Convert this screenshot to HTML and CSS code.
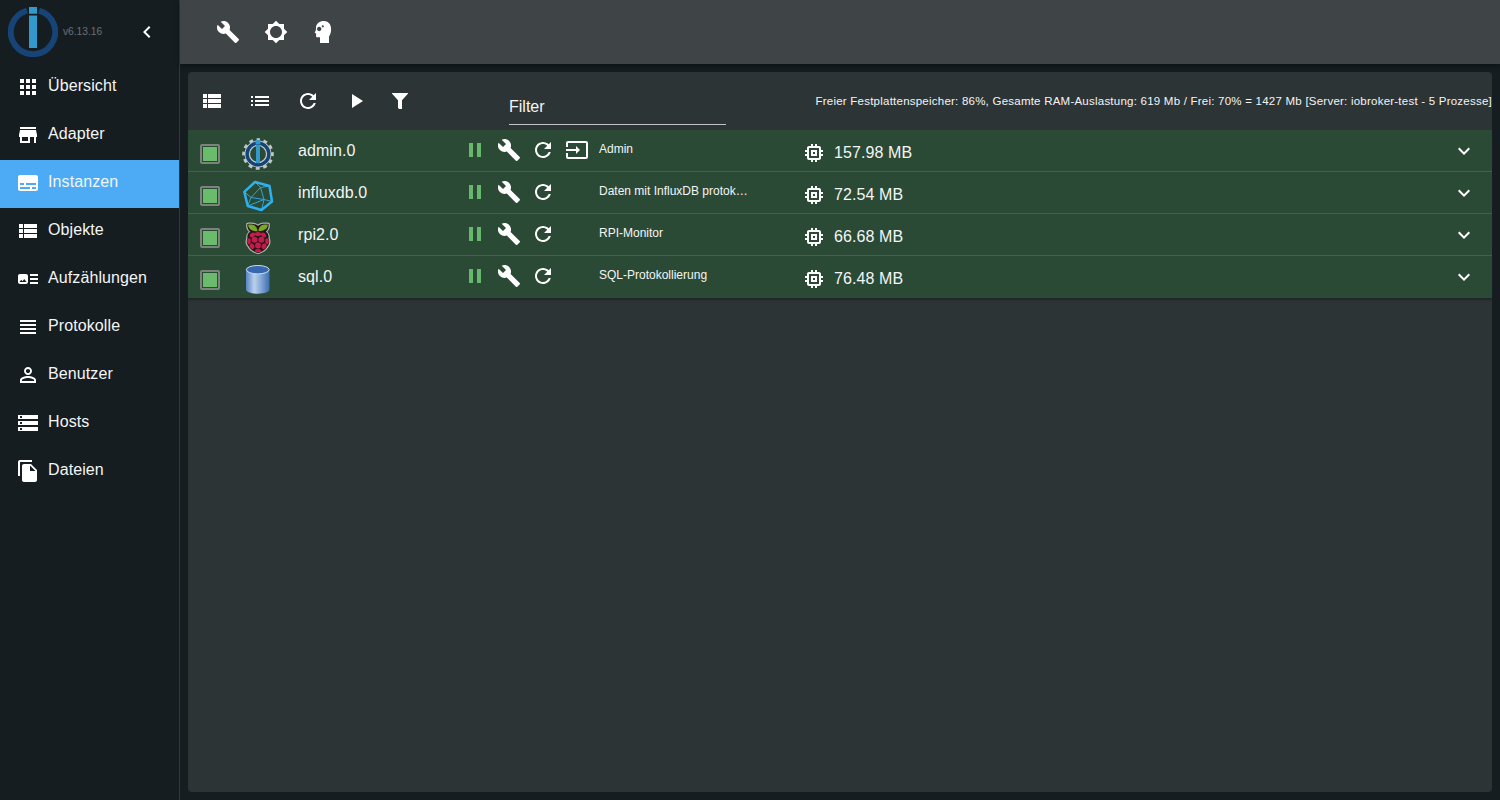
FILE: index.html
```html
<!DOCTYPE html>
<html lang="de">
<head>
<meta charset="utf-8">
<title>Instanzen</title>
<link rel="stylesheet" href="styles.css">
</head>
<body>
<svg class="defs" width="0" height="0">
  <symbol id="build" viewBox="0 0 24 24"><path d="M22.7 19l-9.1-9.1c.9-2.3.4-5-1.5-6.9-2-2-5-2.4-7.4-1.3L9 6 6 9 1.6 4.7C.4 7.1.9 10.1 2.9 12.1c1.9 1.9 4.6 2.4 6.9 1.5l9.1 9.1c.4.4 1 .4 1.4 0l2.3-2.3c.5-.4.5-1.1.1-1.4z"/></symbol>
  <symbol id="refresh" viewBox="0 0 24 24"><path d="M17.65 6.35C16.2 4.9 14.21 4 12 4c-4.42 0-7.99 3.58-7.99 8s3.57 8 7.99 8c3.73 0 6.84-2.55 7.73-6h-2.08c-.82 2.33-3.04 4-5.65 4-3.31 0-6-2.69-6-6s2.69-6 6-6c1.66 0 3.14.69 4.22 1.78L13 11h7V4l-2.35 2.35z"/></symbol>
  <symbol id="viewlist" viewBox="0 0 24 24"><path d="M3 14h4v-4H3v4zm0 5h4v-4H3v4zM3 9h4V5H3v4zm5 5h13v-4H8v4zm0 5h13v-4H8v4zM8 5v4h13V5H8z"/></symbol>
  <symbol id="pause" viewBox="0 0 24 24"><path d="M6 19h4V5H6v14zm8-14v14h4V5h-4z"/></symbol>
  <symbol id="input" viewBox="0 0 24 24"><path d="M21 3.01H3c-1.1 0-2 .9-2 2V9h2V4.99h18v14.03H3V15H1v4.01c0 1.1.9 1.98 2 1.98h18c1.1 0 2-.88 2-1.98v-14c0-1.11-.9-2-2-2zM11 16l4-4-4-4v3H1v2h10v3z"/></symbol>
  <symbol id="memory" viewBox="0 0 24 24"><path d="M15 9H9v6h6V9zm-2 4h-2v-2h2v2zm8-2V9h-2V7c0-1.1-.9-2-2-2h-2V3h-2v2h-2V3H9v2H7c-1.1 0-2 .9-2 2v2H3v2h2v2H3v2h2v2c0 1.1.9 2 2 2h2v2h2v-2h2v2h2v-2h2c1.1 0 2-.9 2-2v-2h2v-2h-2v-2h2zm-4 6H7V7h10v10z"/></symbol>
  <symbol id="more" viewBox="0 0 24 24"><path d="M16.59 8.59L12 13.17 7.41 8.59 6 10l6 6 6-6z"/></symbol>
</svg>
<div class="app">
  <nav class="sidebar">
    <div class="brand">
      <svg class="logo" viewBox="0 0 50 50"><path d="M19 3.6a22.2 22.2 0 1 0 12 0" fill="none" stroke="#164477" stroke-width="6"/><path d="M21 0h8v6.800h-8zM21 8.600h8v32.400h-8z" fill="#3399cc"/></svg>
      <span class="version">v6.13.16</span>
      <svg class="icon" viewBox="0 0 24 24"><path d="M15.41 7.41L14 6l-6 6 6 6 1.41-1.41L10.83 12z"/></svg>
    </div>
    <a class="item"><svg class="icon" viewBox="0 0 24 24"><path d="M4 8h4V4H4v4zm6 12h4v-4h-4v4zm-6 0h4v-4H4v4zm0-6h4v-4H4v4zm6 0h4v-4h-4v4zm6-10v4h4V4h-4zm-6 4h4V4h-4v4zm6 6h4v-4h-4v4zm0 6h4v-4h-4v4z"/></svg><span>Übersicht</span></a>
    <a class="item"><svg class="icon" viewBox="0 0 24 24"><path d="M20 4H4v2h16V4zm1 10v-2l-1-5H4l-1 5v2h1v6h10v-6h4v6h2v-6h1zm-9 4H6v-4h6v4z"/></svg><span>Adapter</span></a>
    <a class="item active"><svg class="icon" viewBox="0 0 24 24"><path d="M20 4H4c-1.1 0-2 .9-2 2v12c0 1.1.9 2 2 2h16c1.1 0 2-.9 2-2V6c0-1.1-.9-2-2-2zM4 12h4v2H4v-2zm10 6H4v-2h10v2zm6 0h-4v-2h4v2zm0-4H10v-2h10v2z"/></svg><span>Instanzen</span></a>
    <a class="item"><svg class="icon"><use href="#viewlist"/></svg><span>Objekte</span></a>
    <a class="item"><svg class="icon" viewBox="0 0 24 24"><path d="M22 13h-8v-2h8v2zm0-6h-8v2h8V7zm-8 10h8v-2h-8v2zm-2-8v6c0 1.1-.9 2-2 2H4c-1.1 0-2-.9-2-2V9c0-1.1.9-2 2-2h6c1.1 0 2 .9 2 2zm-1.5 6l-2.25-3-1.75 2.26-1.25-1.51L3.5 15h7z"/></svg><span>Aufzählungen</span></a>
    <a class="item"><svg class="icon" viewBox="0 0 24 24"><path d="M4 15h16v-2H4v2zm0 4h16v-2H4v2zm0-8h16V9H4v2zm0-6v2h16V5H4z"/></svg><span>Protokolle</span></a>
    <a class="item"><svg class="icon" viewBox="0 0 24 24"><path d="M12 5.900c1.160 0 2.100.94 2.100 2.100s-.94 2.100-2.100 2.100S9.900 9.160 9.900 8s.94-2.100 2.100-2.100m0 9c2.970 0 6.100 1.460 6.100 2.100v1.100H5.900V17c0-.64 3.130-2.100 6.100-2.100M12 4C9.790 4 8 5.790 8 8s1.790 4 4 4 4-1.790 4-4-1.790-4-4-4zm0 9c-2.670 0-8 1.340-8 4v3h16v-3c0-2.660-5.330-4-8-4z"/></svg><span>Benutzer</span></a>
    <a class="item"><svg class="icon" viewBox="0 0 24 24"><path d="M2 20h20v-4H2v4zm2-3h2v2H4v-2zM2 4v4h20V4H2zm4 3H4V5h2v2zm-4 7h20v-4H2v4zm2-3h2v2H4v-2z"/></svg><span>Hosts</span></a>
    <a class="item"><svg class="icon" viewBox="0 0 24 24"><path d="M16 1H4c-1.100 0-2 .9-2 2v14h2V3h12V1zm-1 4l6 6v10c0 1.100-.9 2-2 2H7.990C6.890 23 6 22.100 6 21V7c0-1.100.89-2 1.990-2H15zm-1 7h5.500L14 6.500V12z"/></svg><span>Dateien</span></a>
  </nav>
  <div class="content">
    <header class="appbar">
      <svg class="icon"><use href="#build"/></svg>
      <svg class="icon" viewBox="0 0 24 24"><path d="M20 15.310L23.310 12 20 8.690V4h-4.690L12 .69 8.690 4H4v4.690L.69 12 4 15.310V20h4.690L12 23.310 15.310 20H20v-4.690zM12 18c-3.310 0-6-2.690-6-6s2.690-6 6-6 6 2.690 6 6-2.690 6-6 6z"/></svg>
      <svg class="icon" viewBox="0 0 24 24"><path fill-rule="evenodd" d="M11.800 1C7.500 1 4.300 3.600 4 7.500L3.900 10 2.800 12.600c-.1.400.1.700.5.700h.8v3c0 .6.400 1 1 1H8V23h9v-6.600c1.400-1.700 2.100-4 2.100-7.400C19.100 4 16.200 1 11.800 1zM7.200 6.800a2.200 2.200 0 1 0 .01 0zM10.800 5.200a1.100 1.100 0 1 0 .01 0z"/></svg>
    </header>
    <main class="panel">
      <div class="toolbar">
        <svg class="icon"><use href="#viewlist"/></svg>
        <svg class="icon" viewBox="0 0 24 24"><path d="M3 13h2v-2H3v2zm0 4h2v-2H3v2zm0-8h2V7H3v2zm4 4h14v-2H7v2zm0 4h14v-2H7v2zM7 7v2h14V7H7z"/></svg>
        <svg class="icon"><use href="#refresh"/></svg>
        <svg class="icon" viewBox="0 0 24 24"><path d="M8 5v14l11-7z"/></svg>
        <svg class="icon funnel" viewBox="0 0 24 24"><path d="M4.300 4h15.400c.4 0 .5.500.2.800L14 11.200v8.300c0 .4-.3.600-.7.500h-2.100l-1.200-1V11.200L4.100 4.800c-.3-.3-.2-.8.200-.8z"/></svg>
        <div class="filter">Filter</div>
        <div class="stats">Freier Festplattenspeicher: 86%, Gesamte RAM-Auslastung: 619 Mb / Frei: 70% = 1427 Mb [Server: iobroker-test - 5 Prozesse]</div>
      </div>
      <div class="rows">
        <div class="row">
          <span class="state"></span>
          <svg class="adapter" viewBox="0 0 32 32"><g fill="none" stroke="#bfc7c8"><circle cx="16" cy="16" r="14" stroke-width="3.600" stroke-dasharray="3.800 3.530" stroke-dashoffset="1.900" transform="rotate(-90 16 16)"/><circle cx="16" cy="16" r="12.800" stroke-width="1.200"/><circle cx="16" cy="16" r="8.700" stroke-width="1.600"/></g><circle cx="16" cy="16" r="10.900" fill="none" stroke="#144578" stroke-width="3.300"/><path d="M13.600 2h4.800v4.500h-4.800zM14 7h4v18h-4z" fill="#3399cc"/></svg>
          <span class="name">admin.0</span>
          <div class="actions"><svg class="icon green"><use href="#pause"/></svg><svg class="icon"><use href="#build"/></svg><svg class="icon"><use href="#refresh"/></svg><svg class="icon"><use href="#input"/></svg></div>
          <span class="desc">Admin</span>
          <div class="mem"><svg class="icon"><use href="#memory"/></svg><span>157.98 MB</span></div>
          <svg class="icon expand"><use href="#more"/></svg>
        </div>
        <div class="row">
          <span class="state"></span>
          <svg class="adapter" viewBox="0 0 32 32" fill="none" stroke="#2fb0ee" stroke-linejoin="round"><path d="M13 2l14.500 4L30 21.500 19.500 30 5.700 26 2.300 11.800z" stroke-width="2.500"/><path d="M13 2l5.500 5.500 9-1.500M18.500 7.500L9 17.500l13 2zM2.300 11.800L9 17.500 5.700 26 22 19.500l8 2M22 19.500L19.500 30" stroke-width=".9"/></svg>
          <span class="name">influxdb.0</span>
          <div class="actions"><svg class="icon green"><use href="#pause"/></svg><svg class="icon"><use href="#build"/></svg><svg class="icon"><use href="#refresh"/></svg></div>
          <span class="desc">Daten mit InfluxDB protok…</span>
          <div class="mem"><svg class="icon"><use href="#memory"/></svg><span>72.54 MB</span></div>
          <svg class="icon expand"><use href="#more"/></svg>
        </div>
        <div class="row">
          <span class="state"></span>
          <svg class="adapter" viewBox="0 0 32 32"><path d="M16 2.500C18.500.3 23 .2 27.600 1c.9 4-.4 7-2.300 8.800 2 2 2.800 4 2.500 6.700 1.200 2.500.8 6-1.100 8C25.200 28 20.300 31.500 16 32c-4.300-.5-9.200-4-10.700-7.500-1.900-2-2.300-5.500-1.100-8-.3-2.700.5-4.700 2.500-6.700C4.800 8 3.500 5 4.400 1 9 .2 13.500.3 16 2.500z" fill="#a9b2a8"/><path d="M16 4c2-2.200 6-2.400 10.500-2 .6 3-.6 6-2.800 7.800 2.600 1.600 3.200 4 2.800 6.700 1.300 2.300.9 5.500-1 7.500C24 27.200 20 30.400 16 31c-4-.6-8-3.800-9.500-7-1.900-2-2.300-5.200-1-7.500-.4-2.700.2-5.100 2.800-6.700C6.100 8 4.900 5 5.500 2 10 1.600 14 1.800 16 4z" fill="#26161b"/><path d="M15.500 9.300C9.500 9.500 6.300 7 6.200 2.600c5.500-.5 9 1 9.300 6.700zM16.500 9.300c6-.1 9.200-2.600 9.300-6.700-5.500-.5-9 1-9.300 6.700z" fill="#75a928"/><g fill="#c51a4a"><ellipse cx="16" cy="12" rx="3.100" ry="2"/><ellipse cx="10.400" cy="13" rx="2.900" ry="2.200" transform="rotate(-35 10.400 13)"/><ellipse cx="21.600" cy="13" rx="2.900" ry="2.200" transform="rotate(35 21.600 13)"/><circle cx="12.600" cy="17.700" r="3"/><circle cx="19.400" cy="17.700" r="3"/><ellipse cx="7" cy="19.200" rx="1.800" ry="3"/><ellipse cx="25" cy="19.200" rx="1.800" ry="3"/><circle cx="16" cy="23.500" r="2.900"/><ellipse cx="10" cy="24.200" rx="2.300" ry="2.900" transform="rotate(-30 10 24.200)"/><ellipse cx="22" cy="24.200" rx="2.300" ry="2.900" transform="rotate(30 22 24.200)"/><ellipse cx="16" cy="28.700" rx="3" ry="1.600"/></g></svg>
          <span class="name">rpi2.0</span>
          <div class="actions"><svg class="icon green"><use href="#pause"/></svg><svg class="icon"><use href="#build"/></svg><svg class="icon"><use href="#refresh"/></svg></div>
          <span class="desc">RPI-Monitor</span>
          <div class="mem"><svg class="icon"><use href="#memory"/></svg><span>66.68 MB</span></div>
          <svg class="icon expand"><use href="#more"/></svg>
        </div>
        <div class="row">
          <span class="state"></span>
          <svg class="adapter" viewBox="0 0 32 32"><defs><linearGradient id="cyl"><stop offset="0" stop-color="#5585c2"/><stop offset=".35" stop-color="#bcd0eb"/><stop offset=".6" stop-color="#8badd9"/><stop offset="1" stop-color="#3d6db0"/></linearGradient></defs><path d="M4 5.500v20c0 2.300 5 4.200 11.750 4.200S27.500 27.800 27.500 25.500v-20z" fill="url(#cyl)"/><ellipse cx="15.750" cy="5.700" rx="11.400" ry="4.200" fill="#3767ae" stroke="#cfe0f2"/></svg>
          <span class="name">sql.0</span>
          <div class="actions"><svg class="icon green"><use href="#pause"/></svg><svg class="icon"><use href="#build"/></svg><svg class="icon"><use href="#refresh"/></svg></div>
          <span class="desc">SQL-Protokollierung</span>
          <div class="mem"><svg class="icon"><use href="#memory"/></svg><span>76.48 MB</span></div>
          <svg class="icon expand"><use href="#more"/></svg>
        </div>
      </div>
    </main>
  </div>
</div>
</body>
</html>
```
FILE: styles.css
```css
* { box-sizing: border-box; }
body { margin: 0; background: #151d21; color: #f4f5f5; font: 16px/24px "Liberation Sans", Arial, sans-serif; }
.defs { display: block; }
.app { display: flex; height: 800px; overflow: hidden; }
.icon { display: block; width: 24px; height: 24px; fill: #fff; flex: none; }
.sidebar { width: 180px; flex: none; border-right: 1px solid #32393b; background: #151d21; }
.brand { display: flex; align-items: center; height: 64px; padding-left: 8px; }
.logo { width: 50px; height: 50px; flex: none; }
.version { width: 72px; margin-left: 5px; font-size: 10.2px; color: #6b7072; }
.item { display: flex; align-items: center; height: 48px; padding: 0 0 2px 16px; }
.item span { margin: -2px 0 0 8px; letter-spacing: .1px; white-space: nowrap; }
.active { background: #4dabf5; }
.content { flex: 1; min-width: 0; display: flex; flex-direction: column; padding-bottom: 8px; }
.appbar { display: flex; align-items: center; gap: 24px; height: 64px; flex: none; padding-left: 36px; background: #3f4447; box-shadow: 0 2px 5px rgba(0,0,0,.4); }
.panel { flex: 1; margin: 8px 8px 0; border-radius: 4px; overflow: hidden; background: #2d3436; }
.toolbar { display: flex; align-items: center; gap: 24px; height: 58px; padding-left: 12px; }
.funnel { margin-left: -4px; }
.filter { width: 217px; height: 30px; margin: 18px 0 0 73px; border-bottom: 1px solid #c0c2c3; }
.stats { margin-left: auto; font-size: 11.5px; letter-spacing: .23px; white-space: nowrap; }
.rows { box-shadow: 0 2px 2px rgba(0,0,0,.3); }
.row { display: flex; height: 42px; padding-left: 12px; background: #2b4a35; border-bottom: 1px solid #446148; }
.row:last-child { border-color: #2b4a35; }
.state { width: 20px; height: 20px; margin-top: 14px; border: 2px solid #7c837d; border-radius: 2px; background: #6abb6c; box-shadow: inset 0 0 0 1px #2b4a35; }
.adapter { width: 32px; height: 32px; margin: 8px 24px 0 22px; }
.name { width: 165px; margin-top: 9px; letter-spacing: .08px; }
.actions { display: flex; gap: 10px; width: 136px; padding-top: 8px; }
.green { fill: #66b86a; }
.desc { width: 151px; margin-top: 7px; font-size: 12px; white-space: nowrap; }
.mem { display: flex; gap: 8px; margin: 11px 0 0 52px; }
.mem span { letter-spacing: .1px; }
.expand { margin: 9px 16px 0 auto; }
```
